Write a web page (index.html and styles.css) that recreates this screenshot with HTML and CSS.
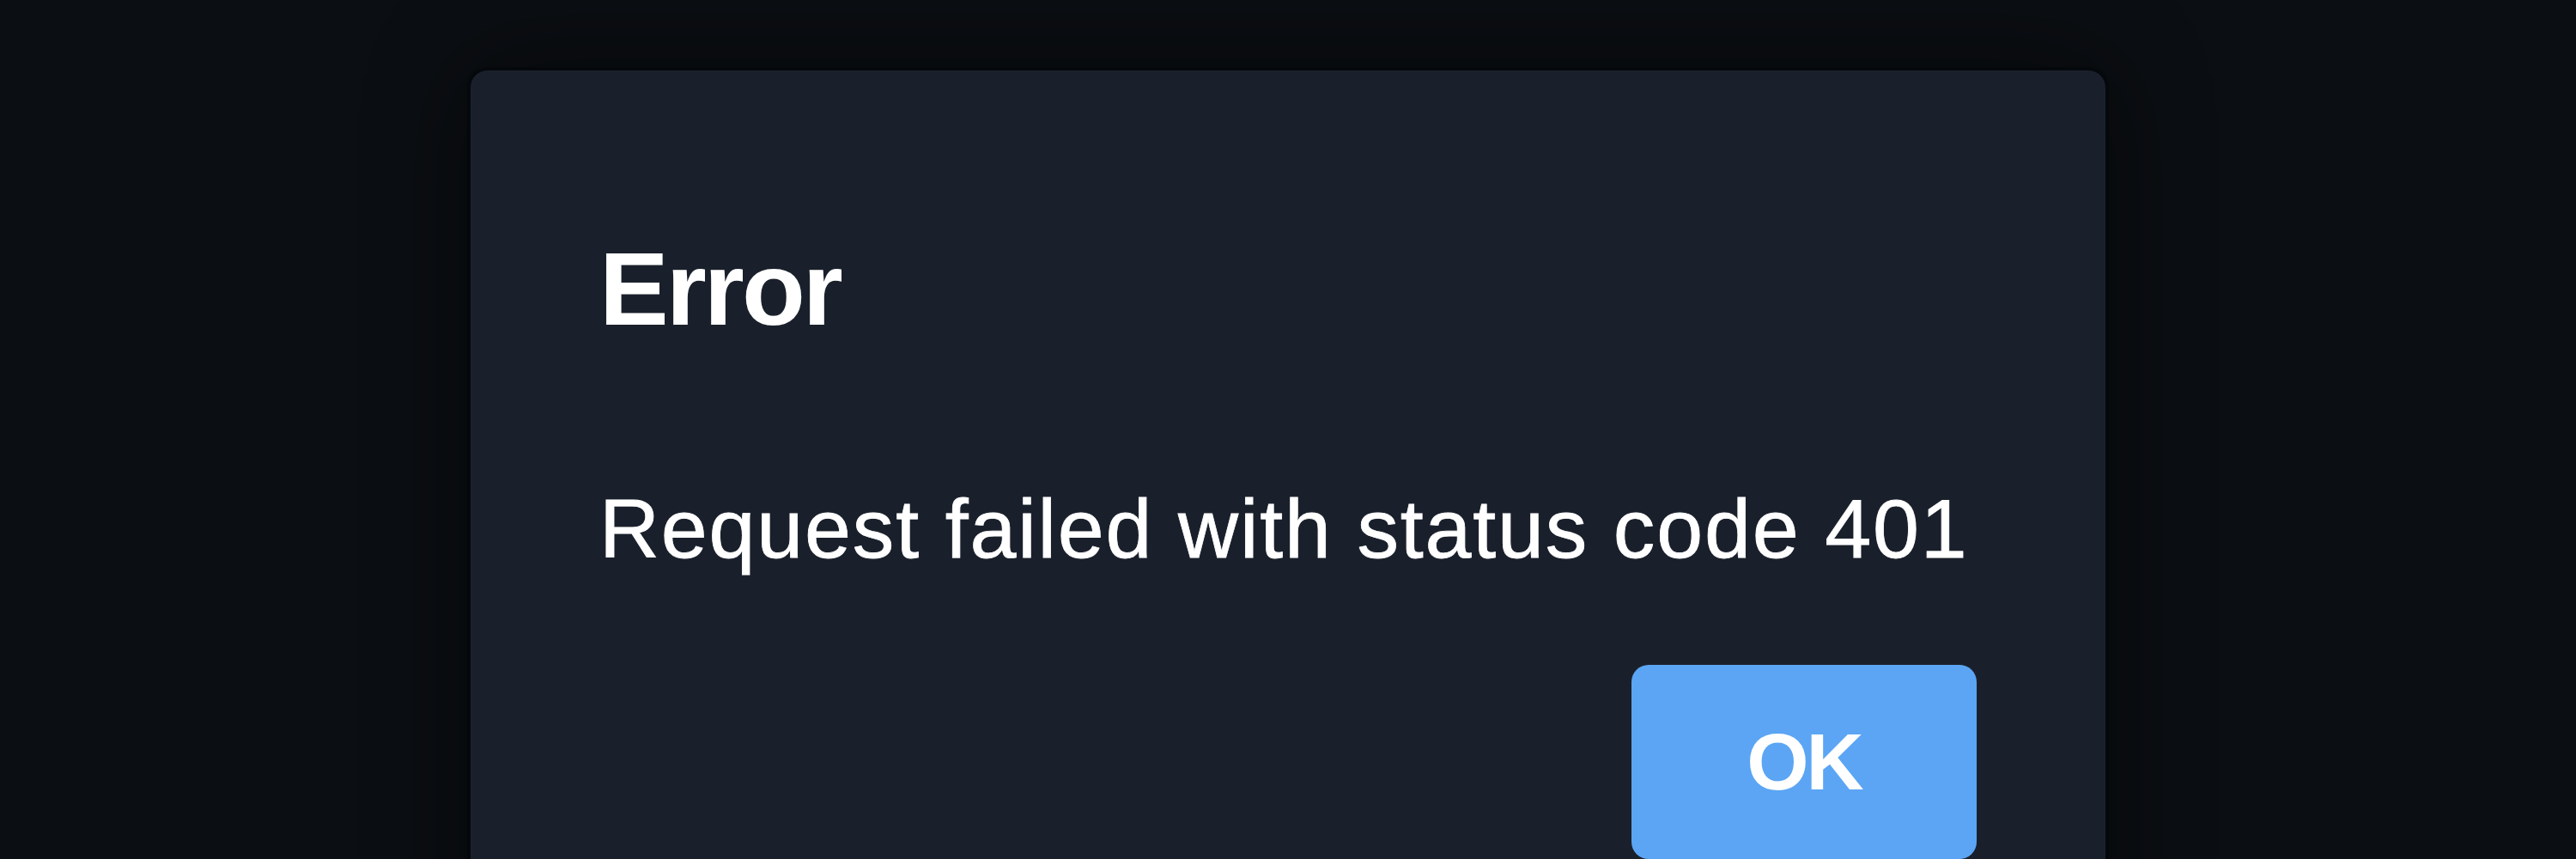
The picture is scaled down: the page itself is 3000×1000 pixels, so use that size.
FILE: index.html
```html
<!DOCTYPE html>
<html lang="en">
<head>
    <meta charset="UTF-8">
    <meta name="viewport" content="width=device-width, initial-scale=1.0">
    <title>Error</title>
    <link rel="stylesheet" href="styles.css">
</head>
<body>
    <div class="overlay">
        <div class="dialog" role="alertdialog">
            <h2 class="dialog-title">Error</h2>
            <p class="dialog-body">Request failed with status code 401</p>
            <div class="dialog-footer">
                <button class="ok-button">OK</button>
            </div>
        </div>
    </div>
</body>
</html>
```

FILE: styles.css
```css
/* Base */
* {
    margin: 0;
    padding: 0;
    box-sizing: border-box;
    font-family: 'Liberation Sans', Arial, Helvetica, sans-serif;
}

body {
    background-color: #0b0e12;
    height: 100vh;
    overflow: hidden;
}

/* Overlay */
.overlay {
    display: flex;
    justify-content: center;
    padding-top: 82px;
}

/* Dialog */
.dialog {
    width: 1904px;
    background-color: #1a202b;
    border-radius: 20px;
    box-shadow: 0 0 0 4px rgba(4, 7, 10, 0.6), 0 0 120px rgba(0, 0, 0, 0.45);
    padding: 182px 150px 150px 150px;
    color: #ffffff;
}

.dialog-title {
    font-size: 121px;
    font-weight: 700;
    line-height: 144px;
    letter-spacing: -3px;
}

.dialog-body {
    margin-top: 137px;
    font-size: 97px;
    line-height: 142px;
    letter-spacing: 1.8px;
    -webkit-text-stroke: 0.8px #ffffff;
}

/* Footer */
.dialog-footer {
    display: flex;
    justify-content: flex-end;
    margin-top: 87px;
}

.ok-button {
    width: 402px;
    height: 226px;
    display: flex;
    align-items: center;
    justify-content: center;
    background-color: #5ba5f4;
    border: none;
    border-radius: 20px;
    color: #ffffff;
    font-size: 93px;
    font-weight: 700;
    line-height: 1;
    letter-spacing: -3px;
    cursor: pointer;
}
```
